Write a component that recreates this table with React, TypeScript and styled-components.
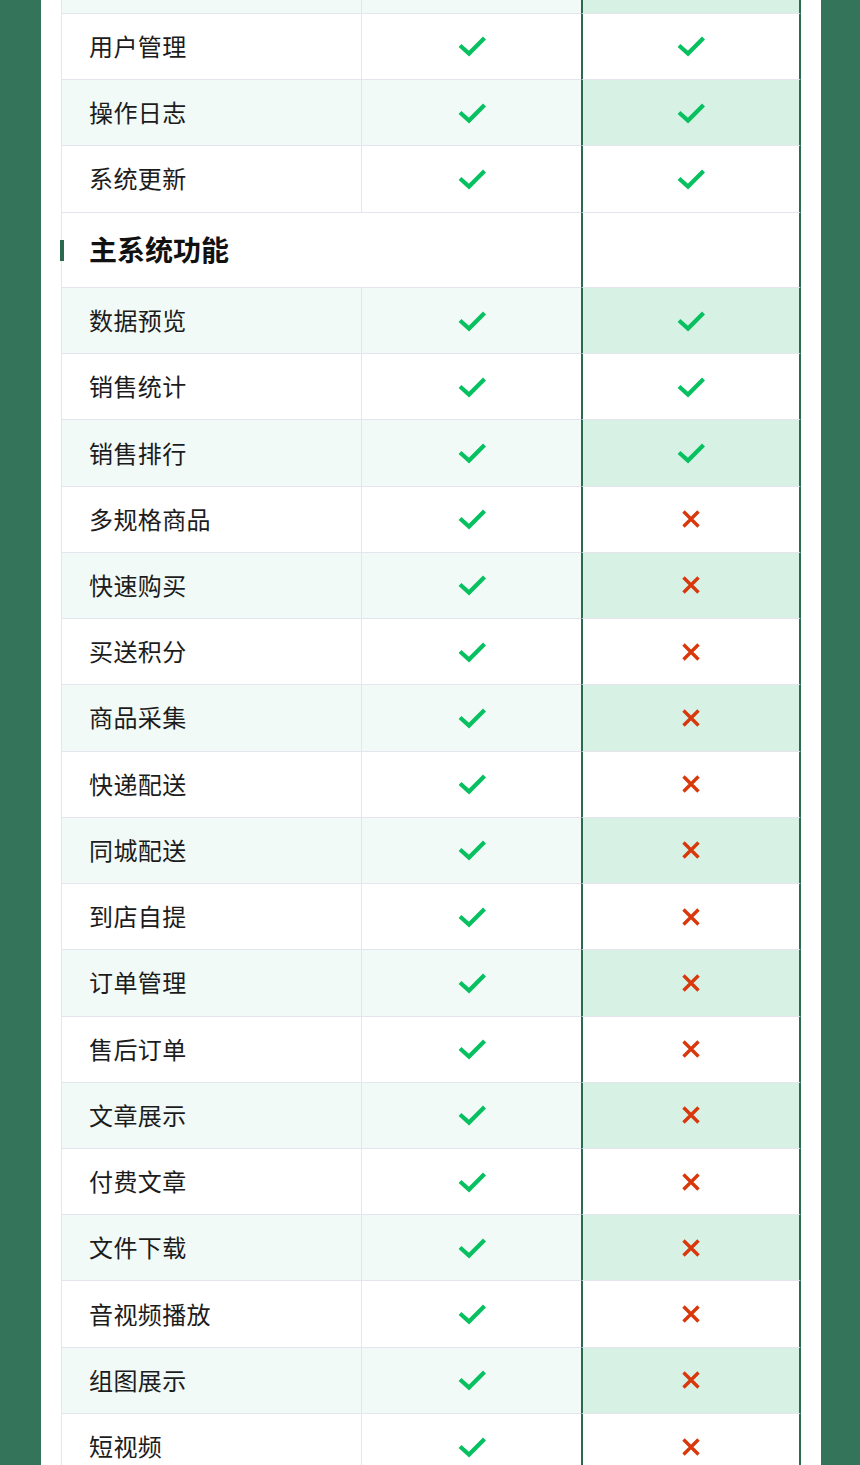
import React from 'react';
import styled, { createGlobalStyle } from 'styled-components';

const GlobalStyle = createGlobalStyle`
    html, body {
        margin: 0;
        padding: 0;
        height: 1465px;
        overflow: hidden;
        background: #33745a;
    }
    body {
        font-family: "Noto Sans CJK SC", "Noto Sans", sans-serif;
        color: #1c1c1c;
    }
`;

const ROW_HEIGHT = '66.24px';
const LINE = '#e4e5ed';
const DARK = '#2c6a4f';

const Page = styled.div`
    padding: 0 39px 0 41px;
`;

const Card = styled.div`
    background: #ffffff;
    padding: 0 20px;
    margin-top: -52.4px;
`;

const Table = styled.div`
    width: 740px;
    display: flex;
    flex-direction: column;
`;

const Row = styled.div`
    display: grid;
    grid-template-columns: 300px 220px 220px;
    height: ${ROW_HEIGHT};
`;

const HeaderRow = styled(Row)`
    height: 75.4px;
`;

const LabelCell = styled.div<{ $striped: boolean }>`
    display: flex;
    align-items: center;
    box-sizing: border-box;
    padding-left: 27px;
    padding-bottom: 2px;
    font-size: 24px;
    letter-spacing: 0.4px;
    background: ${(p) => (p.$striped ? '#f1faf6' : '#ffffff')};
    border-left: 1px solid ${LINE};
    border-bottom: 1px solid ${LINE};
`;

const MarkCell = styled.div<{ $striped: boolean }>`
    display: flex;
    align-items: center;
    justify-content: center;
    box-sizing: border-box;
    background: ${(p) => (p.$striped ? '#f1faf6' : '#ffffff')};
    border-left: 1px solid ${LINE};
    border-bottom: 1px solid ${LINE};
`;

const HighlightCell = styled.div<{ $striped: boolean }>`
    display: flex;
    align-items: center;
    justify-content: center;
    box-sizing: border-box;
    background: ${(p) => (p.$striped ? '#d7f2e5' : '#ffffff')};
    border-left: 2px solid ${DARK};
    border-right: 2px solid ${DARK};
    border-bottom: 1px solid ${LINE};
`;

const SectionTitle = styled.div`
    grid-column: span 2;
    position: relative;
    display: flex;
    align-items: center;
    box-sizing: border-box;
    padding-left: 27px;
    padding-bottom: 2px;
    font-size: 28px;
    font-weight: 700;
    color: #111111;
    border-left: 1px solid ${LINE};
    border-bottom: 1px solid ${LINE};

    &::before {
        content: '';
        position: absolute;
        left: -2px;
        top: 27px;
        width: 4px;
        height: 21px;
        background: ${DARK};
    }
`;

const Check = () => (
    <svg width="28" height="22" viewBox="0 0 28 22">
        <polyline
            points="2,10.5 11,18.5 26.5,3"
            fill="none"
            stroke="#07c160"
            strokeWidth="4.2"
        />
    </svg>
);

const Cross = () => (
    <svg width="20" height="20" viewBox="0 0 20 20">
        <path
            d="M2.5 2.5 L17.5 17.5 M17.5 2.5 L2.5 17.5"
            fill="none"
            stroke="#d9380c"
            strokeWidth="3.4"
        />
    </svg>
);

interface Feature {
    name: string;
    basic: boolean;
    lite: boolean;
}

const topFeatures: Feature[] = [
    { name: '', basic: true, lite: true },
    { name: '用户管理', basic: true, lite: true },
    { name: '操作日志', basic: true, lite: true },
    { name: '系统更新', basic: true, lite: true },
];

const mainFeatures: Feature[] = [
    { name: '数据预览', basic: true, lite: true },
    { name: '销售统计', basic: true, lite: true },
    { name: '销售排行', basic: true, lite: true },
    { name: '多规格商品', basic: true, lite: false },
    { name: '快速购买', basic: true, lite: false },
    { name: '买送积分', basic: true, lite: false },
    { name: '商品采集', basic: true, lite: false },
    { name: '快递配送', basic: true, lite: false },
    { name: '同城配送', basic: true, lite: false },
    { name: '到店自提', basic: true, lite: false },
    { name: '订单管理', basic: true, lite: false },
    { name: '售后订单', basic: true, lite: false },
    { name: '文章展示', basic: true, lite: false },
    { name: '付费文章', basic: true, lite: false },
    { name: '文件下载', basic: true, lite: false },
    { name: '音视频播放', basic: true, lite: false },
    { name: '组图展示', basic: true, lite: false },
    { name: '短视频', basic: true, lite: false },
];

const FeatureRow = ({ feature, striped }: { feature: Feature; striped: boolean }) => (
    <Row>
        <LabelCell $striped={striped}>{feature.name}</LabelCell>
        <MarkCell $striped={striped}>{feature.basic ? <Check /> : <Cross />}</MarkCell>
        <HighlightCell $striped={striped}>
            {feature.lite ? <Check /> : <Cross />}
        </HighlightCell>
    </Row>
);

export default function App() {
    return (
        <>
            <GlobalStyle />
            <Page>
                <Card>
                    <Table>
                        {topFeatures.map((f, i) => (
                            <FeatureRow key={'t' + i} feature={f} striped={i % 2 === 0} />
                        ))}
                        <HeaderRow>
                            <SectionTitle>主系统功能</SectionTitle>
                            <HighlightCell $striped={false} />
                        </HeaderRow>
                        {mainFeatures.map((f, i) => (
                            <FeatureRow key={'m' + i} feature={f} striped={i % 2 === 0} />
                        ))}
                    </Table>
                </Card>
            </Page>
        </>
    );
}
